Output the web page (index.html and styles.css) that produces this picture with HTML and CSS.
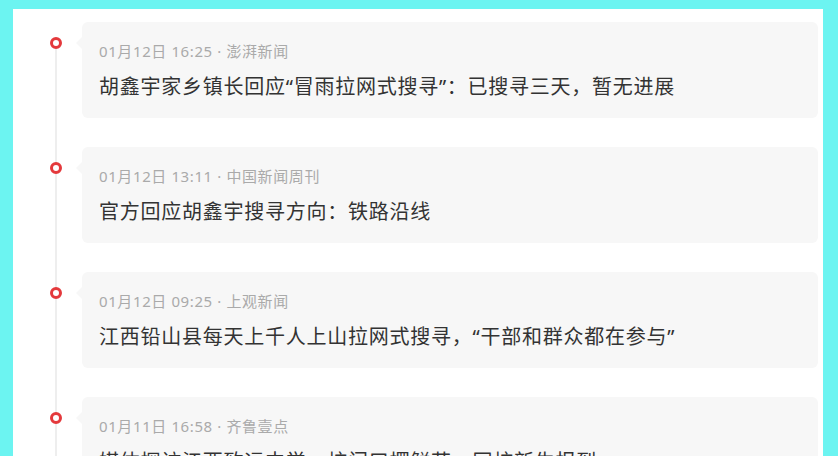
FILE: index.html
```html
<!DOCTYPE html>
<html lang="zh-CN">
  <head>
    <meta charset="UTF-8" />
    <meta name="viewport" content="width=device-width, initial-scale=1.0" />
    <title>胡鑫宇事件时间线</title>
    <link rel="stylesheet" href="styles.css">
  </head>
  <body>
    <div class="panel">
      <ul class="timeline">
        <li class="item">
          <div class="marker"><span class="dot"></span></div>
          <div class="card">
            <div class="meta">01月12日 16:25 · 澎湃新闻</div>
            <div class="title">胡鑫宇家乡镇长回应“冒雨拉网式搜寻”：已搜寻三天，暂无进展</div>
          </div>
        </li>
        <li class="item">
          <div class="marker"><span class="dot"></span></div>
          <div class="card">
            <div class="meta">01月12日 13:11 · 中国新闻周刊</div>
            <div class="title">官方回应胡鑫宇搜寻方向：铁路沿线</div>
          </div>
        </li>
        <li class="item">
          <div class="marker"><span class="dot"></span></div>
          <div class="card">
            <div class="meta">01月12日 09:25 · 上观新闻</div>
            <div class="title">江西铅山县每天上千人上山拉网式搜寻，“干部和群众都在参与”</div>
          </div>
        </li>
        <li class="item">
          <div class="marker"><span class="dot"></span></div>
          <div class="card">
            <div class="meta">01月11日 16:58 · 齐鲁壹点</div>
            <div class="title">媒体探访江西致远中学：校门口摆鲜花，同校新生报到</div>
          </div>
        </li>
      </ul>
    </div>
  </body>
</html>
```

FILE: styles.css
```css
body {
  margin: 0;
  background: #6cf4f1;
  font-family: "Noto Sans", "Noto Sans CJK SC", sans-serif;
  overflow: hidden;
}
.panel {
  margin: 9px 15px 0 13px;
  background: #fff;
  padding: 13px 5px 0 37px;
  height: 460px;
  overflow: hidden;
}
.timeline {
  list-style: none;
  margin: 0;
  padding: 0;
}
.item {
  display: flex;
  gap: 20px;
}
.marker {
  width: 12px;
  flex-shrink: 0;
  background: linear-gradient(#eee, #eee) no-repeat center top / 2px 100%;
}
.item:first-child .marker {
  background-position: center 21px;
}
.dot {
  display: block;
  width: 6px;
  height: 6px;
  margin-top: 15px;
  border: 3px solid #e4393c;
  border-radius: 50%;
  background: #fff;
}
.card {
  position: relative;
  flex: 1;
  background: #f7f7f7;
  border-radius: 6px;
  padding: 18px 17px 17px;
  margin-bottom: 29px;
}
.card::before {
  content: "";
  position: absolute;
  left: -6px;
  top: 15px;
  border: 6px solid transparent;
  border-left: 0;
  border-right-color: #f7f7f7;
}
.meta {
  font-size: 15px;
  line-height: 22px;
  letter-spacing: 0.6px;
  color: #aaa;
}
.title {
  margin-top: 11px;
  font-size: 20px;
  line-height: 28px;
  letter-spacing: 0.75px;
  color: #333;
}
```
